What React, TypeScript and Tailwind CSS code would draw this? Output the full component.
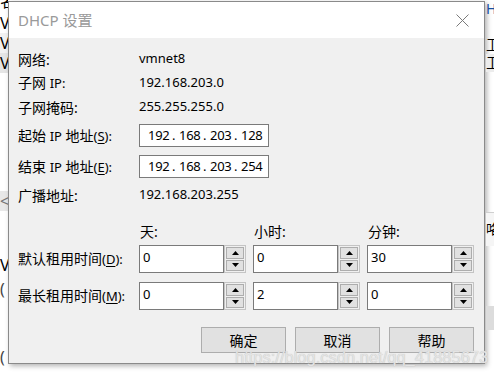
const cjk = "font-['Segoe_UI','Noto_Sans','Noto_Sans_CJK_SC',sans-serif]";

function Arrow({ up }: { up?: boolean }) {
  return (
    <svg width="7" height="4" viewBox="0 0 7 4">
      {up ? <polygon points="0,4 7,4 3.5,0" fill="#000" /> : <polygon points="0,0 7,0 3.5,4" fill="#000" />}
    </svg>
  );
}

function Spin({ value }: { value: string }) {
  return (
    <div className="flex h-[28px] w-[107px]">
      <div className="flex-1 border border-[#7a7a7a] bg-white pl-[3px] pt-[2px] text-[13px] leading-[18px] text-black">
        {value}
      </div>
      <div className="flex w-[22px] flex-col gap-[1px] border border-[#c4c4c4] bg-[#f0f0f0] p-[1px]">
        <div className="flex flex-1 items-center justify-center border border-[#adadad] bg-[#e1e1e1]">
          <Arrow up />
        </div>
        <div className="flex flex-1 items-center justify-center border border-[#adadad] bg-[#e1e1e1]">
          <Arrow />
        </div>
      </div>
    </div>
  );
}

function IpBox({ value }: { value: string[] }) {
  return (
    <div className="flex h-[23px] w-[130px] items-center overflow-hidden border border-[#7a7a7a] bg-white pl-[8px] text-[13px] tracking-[-0.3px] text-black">
      {value.map((v, i) => (
        <span key={i} className="flex">
          {i > 0 && <span className="w-[12px] pl-[5px]">.</span>}
          <span className="w-[19px] whitespace-nowrap">{v}</span>
        </span>
      ))}
    </div>
  );
}

function Key({ k }: { k: string }) {
  return (
    <span className="text-[13px]">
      (<span className="underline underline-offset-2">{k}</span>):
    </span>
  );
}

function Btn({ label }: { label: string }) {
  return (
    <div className="flex h-[26px] w-[85px] items-center justify-center border border-[#adadad] bg-[#e1e1e1] text-[14px] text-black">
      {label}
    </div>
  );
}

export default function App() {
  return (
    <div className={`relative flex h-[373px] w-[494px] overflow-hidden bg-white ${cjk}`}>
      {/* background window, left */}
      <div className="flex w-[8px] flex-col overflow-hidden text-[16px] leading-[20px] text-black">
        <div className="-mt-[9px]">名</div>
        <div className="mt-[2px]">V</div>
        <div className="bg-[#f2f2f2]">V</div>
        <div className="bg-[#e5e5e5]">V</div>
        <div className="mt-[118px] bg-[#e8e8e8] text-[#777]">&lt;</div>
        <div className="mt-[44px]">V</div>
        <div className="mt-[4px] text-[#444]">(</div>
        <div className="mt-[48px] text-[#444]">(</div>
      </div>

      {/* dialog */}
      <div className="mt-[1px] flex h-[363px] w-[477px] shrink-0 flex-col border border-[#8a8a8a] shadow-[2px_2px_5px_rgba(0,0,0,0.3)]">
        <div className="flex h-[36px] items-center justify-between bg-white pl-[9px] pr-[15px]">
          <span className="text-[15px] text-[#9a9a9a]">DHCP 设置</span>
          <svg width="13" height="13" viewBox="0 0 13 13">
            <path d="M0.5 0.5 L12.5 12.5 M12.5 0.5 L0.5 12.5" stroke="#7a7a7a" strokeWidth="1" />
          </svg>
        </div>

        <div className="flex flex-1 flex-col bg-[#f0f0f0] pl-[9px] pr-[10px] pt-[9px] text-[14px] text-black">
          <div className="flex h-[24px] items-center">
            <span className="w-[121px]">网络:</span>
            <span className="text-[13px]">vmnet8</span>
          </div>
          <div className="flex h-[24px] items-center">
            <span className="w-[121px]">子网 <span className="text-[13px]">IP:</span></span>
            <span className="text-[13px]">192.168.203.0</span>
          </div>
          <div className="flex h-[24px] items-center">
            <span className="w-[121px]">子网掩码:</span>
            <span className="text-[13px]">255.255.255.0</span>
          </div>
          <div className="mt-[5px] flex h-[23px] items-center">
            <span className="w-[121px]">起始 <span className="text-[13px]">IP</span> 地址<Key k="S" /></span>
            <IpBox value={["192", "168", "203", "128"]} />
          </div>
          <div className="mt-[8px] flex h-[23px] items-center">
            <span className="w-[121px]">结束 <span className="text-[13px]">IP</span> 地址<Key k="E" /></span>
            <IpBox value={["192", "168", "203", "254"]} />
          </div>
          <div className="mt-[5px] flex h-[24px] items-center">
            <span className="w-[121px]">广播地址:</span>
            <span className="text-[13px]">192.168.203.255</span>
          </div>

          <div className="mt-[14px] flex h-[20px] items-center">
            <span className="w-[122px]" />
            <span className="w-[114px]">天:</span>
            <span className="w-[114px]">小时:</span>
            <span>分钟:</span>
          </div>
          <div className="mt-[4px] flex items-center">
            <span className="w-[121px]">默认租用时间<Key k="D" /></span>
            <div className="flex gap-[7px]">
              <Spin value="0" />
              <Spin value="0" />
              <Spin value="30" />
            </div>
          </div>
          <div className="mt-[9px] flex items-center">
            <span className="w-[121px]">最长租用时间<Key k="M" /></span>
            <div className="flex gap-[7px]">
              <Spin value="0" />
              <Spin value="2" />
              <Spin value="0" />
            </div>
          </div>

          <div className="mt-[17px] flex justify-end gap-[9px]">
            <Btn label="确定" />
            <Btn label="取消" />
            <Btn label="帮助" />
          </div>
        </div>
      </div>

      {/* background window, right */}
      <div className="ml-[1px] flex flex-1 flex-col overflow-hidden text-[14px] leading-[18px] text-black">
        <div className="text-[#1a4fa0]">H</div>
        <div className="mt-[18px]">卫</div>
        <div className="bg-[#ececec]">卫</div>
        <div className="mt-[140px] h-[34px] border-t border-[#cfcfcf] bg-[#f5f5f5] pt-[7px]">咯</div>
        <div className="mt-[60px] h-[24px] bg-[#dcdcdc]" />
      </div>

      {/* watermark */}
      <div className="absolute left-[235px] top-[345px] whitespace-nowrap font-['Liberation_Sans',sans-serif] text-[16.5px] text-[#e4e4e4] [text-shadow:0_0_1px_#b8b8b8]">
        https://blog.csdn.net/qq_41885673
      </div>
    </div>
  );
}
